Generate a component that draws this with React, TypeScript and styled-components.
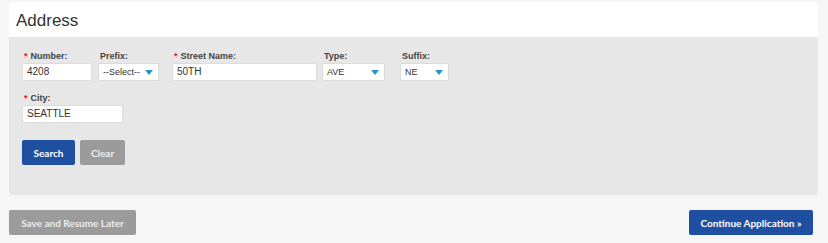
import React from 'react'
import styled, { createGlobalStyle } from 'styled-components'

const GlobalStyle = createGlobalStyle`
  * {
    box-sizing: border-box;
  }
  body {
    margin: 0;
    background: #f6f6f6;
    font-family: 'Liberation Sans', Arial, sans-serif;
    color: #333;
  }
`

type FieldDef = {
  label: string
  required?: boolean
  width: number
  gap: number
  value: string
  select?: boolean
}

const row1: FieldDef[] = [
  { label: 'Number:', required: true, width: 70, gap: 0, value: '4208' },
  { label: 'Prefix:', width: 61, gap: 6, value: '--Select--', select: true },
  { label: 'Street Name:', required: true, width: 145, gap: 13, value: '50TH' },
  { label: 'Type:', width: 63, gap: 5, value: 'AVE', select: true },
  { label: 'Suffix:', width: 49, gap: 15, value: 'NE', select: true },
]

function Field({ label, required, width, gap, value, select }: FieldDef) {
  return (
    <FieldBox $width={width} $gap={gap}>
      <Label>
        {required && <Star>*</Star>}
        {label}
      </Label>
      {select ? (
        <SelectBox>
          <span>{value}</span>
          <Caret />
        </SelectBox>
      ) : (
        <TextBox>{value}</TextBox>
      )}
    </FieldBox>
  )
}

function App() {
  return (
    <>
      <GlobalStyle />
      <Page>
        <Panel>
          <Header>
            <h2>Address</h2>
          </Header>
          <Body>
            <FieldRow>
              {row1.map((f) => (
                <Field key={f.label} {...f} />
              ))}
            </FieldRow>
            <FieldRow>
              <Field label="City:" required width={101} gap={0} value="SEATTLE" />
            </FieldRow>
            <ButtonRow>
              <Button $variant="primary" $width={53}>
                Search
              </Button>
              <Button $variant="muted" $width={45}>
                Clear
              </Button>
            </ButtonRow>
          </Body>
        </Panel>
        <Footer>
          <Button $variant="muted" $width={127}>
            Save and Resume Later
          </Button>
          <Button $variant="primary" $width={124}>
            Continue Application »
          </Button>
        </Footer>
      </Page>
    </>
  )
}

export default App

const Page = styled.div`
  width: 828px;
  padding: 2px 10px 0 9px;
`
const Panel = styled.div`
  width: 809px;
  border-radius: 4px;
  overflow: hidden;
`
const Header = styled.div`
  height: 35px;
  background: #fff;
  padding: 9px 7px 0;
  h2 {
    margin: 0;
    font-family: Arial, 'Liberation Sans', sans-serif;
    font-weight: normal;
    font-size: 17px;
    color: #333;
  }
`
const Body = styled.div`
  height: 158px;
  background: #e7e7e7;
  padding: 14px 13px 0;
  display: flex;
  flex-direction: column;
  gap: 12px;
`
const FieldRow = styled.div`
  display: flex;
  align-items: flex-end;
`
const FieldBox = styled.div<{ $width: number; $gap: number }>`
  width: ${(p) => p.$width}px;
  margin-left: ${(p) => p.$gap}px;
  display: flex;
  flex-direction: column;
`
const Label = styled.div`
  height: 12px;
  font-size: 9px;
  font-weight: bold;
  color: #444;
  padding-left: 2px;
  line-height: 10px;
`
const Star = styled.span`
  color: #d0202a;
  margin-right: 3px;
`
const TextBox = styled.div`
  height: 18px;
  background: #fff;
  border: 1px solid #dcdcdc;
  font-size: 10px;
  line-height: 16px;
  padding-left: 4px;
  color: #333;
`
const SelectBox = styled(TextBox)`
  display: flex;
  align-items: center;
  justify-content: space-between;
  padding: 0 5px 0 4px;
  font-size: 9px;
  line-height: 1;
`
const Caret = styled.span`
  width: 0;
  height: 0;
  border-left: 4px solid transparent;
  border-right: 4px solid transparent;
  border-top: 5px solid #2a8fd0;
`
const ButtonRow = styled.div`
  display: flex;
  gap: 5px;
  margin-top: 5px;
`
const Button = styled.button<{ $variant: 'primary' | 'muted'; $width: number }>`
  width: ${(p) => p.$width}px;
  height: 25px;
  padding: 0;
  border: none;
  border-radius: 2px;
  background: ${(p) => (p.$variant === 'primary' ? '#1f4fa1' : '#9b9b9b')};
  color: ${(p) => (p.$variant === 'primary' ? '#fff' : '#ececec')};
  font-family: Lato, 'Liberation Sans', sans-serif;
  font-weight: bold;
  font-size: 10px;
  cursor: pointer;
`
const Footer = styled.div`
  display: flex;
  justify-content: space-between;
  margin-top: 15px;
  width: 804px;
`
